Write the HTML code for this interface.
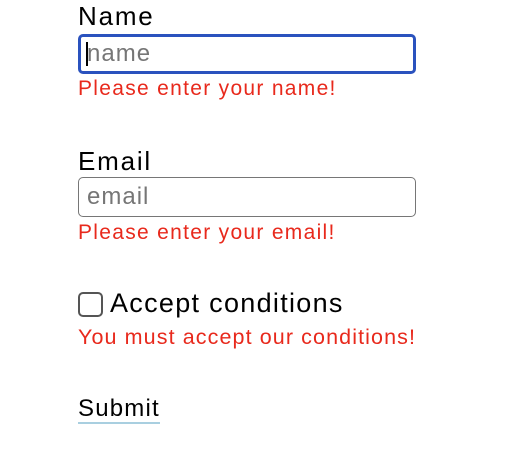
<!DOCTYPE html>
<html><head><style>
body{margin:0;width:520px;height:472px;background:#fff;font-family:"Liberation Sans",Arial,sans-serif;position:relative;overflow:hidden}
.a{position:absolute;white-space:nowrap}
.lbl{font-size:26px;color:#000;letter-spacing:1.8px}
.err{font-size:21px;color:#e8291c;letter-spacing:1.3px}
.in{position:absolute;left:78px;width:338px;height:40px;box-sizing:border-box;border-radius:5px}
.ph{position:absolute;left:8px;top:6px;font-size:24px;color:#767676;letter-spacing:1px}
</style></head><body>
<div class="a lbl" style="left:78px;top:1px">Name</div>
<div class="in" style="top:34px;border:3px solid #2a52be;">
<div style="position:absolute;left:5px;top:5px;width:2px;height:24px;background:#000"></div>
<div class="ph" style="left:6px;top:3px">name</div></div>
<div class="a err" style="left:78px;top:77px">Please enter your name!</div>
<div class="a lbl" style="left:78px;top:146px">Email</div>
<div class="in" style="top:177px;border:1.5px solid #767676;"><div class="ph" style="top:5px">email</div></div>
<div class="a err" style="left:78px;top:221px">Please enter your email!</div>
<div class="a" style="left:78px;top:292px;width:25px;height:25px;box-sizing:border-box;border:2px solid #555;border-radius:5px"></div>
<div class="a" style="left:110px;top:288px;font-size:27px;color:#000;letter-spacing:1.3px">Accept conditions</div>
<div class="a err" style="left:78px;top:325px;font-size:21.5px;letter-spacing:1.1px">You must accept our conditions!</div>
<div class="a" style="left:78px;top:396px;font-size:24px;color:#000;border-bottom:2px solid #a9cfe0;line-height:26px;letter-spacing:1.2px">Submit</div>
</body></html>
